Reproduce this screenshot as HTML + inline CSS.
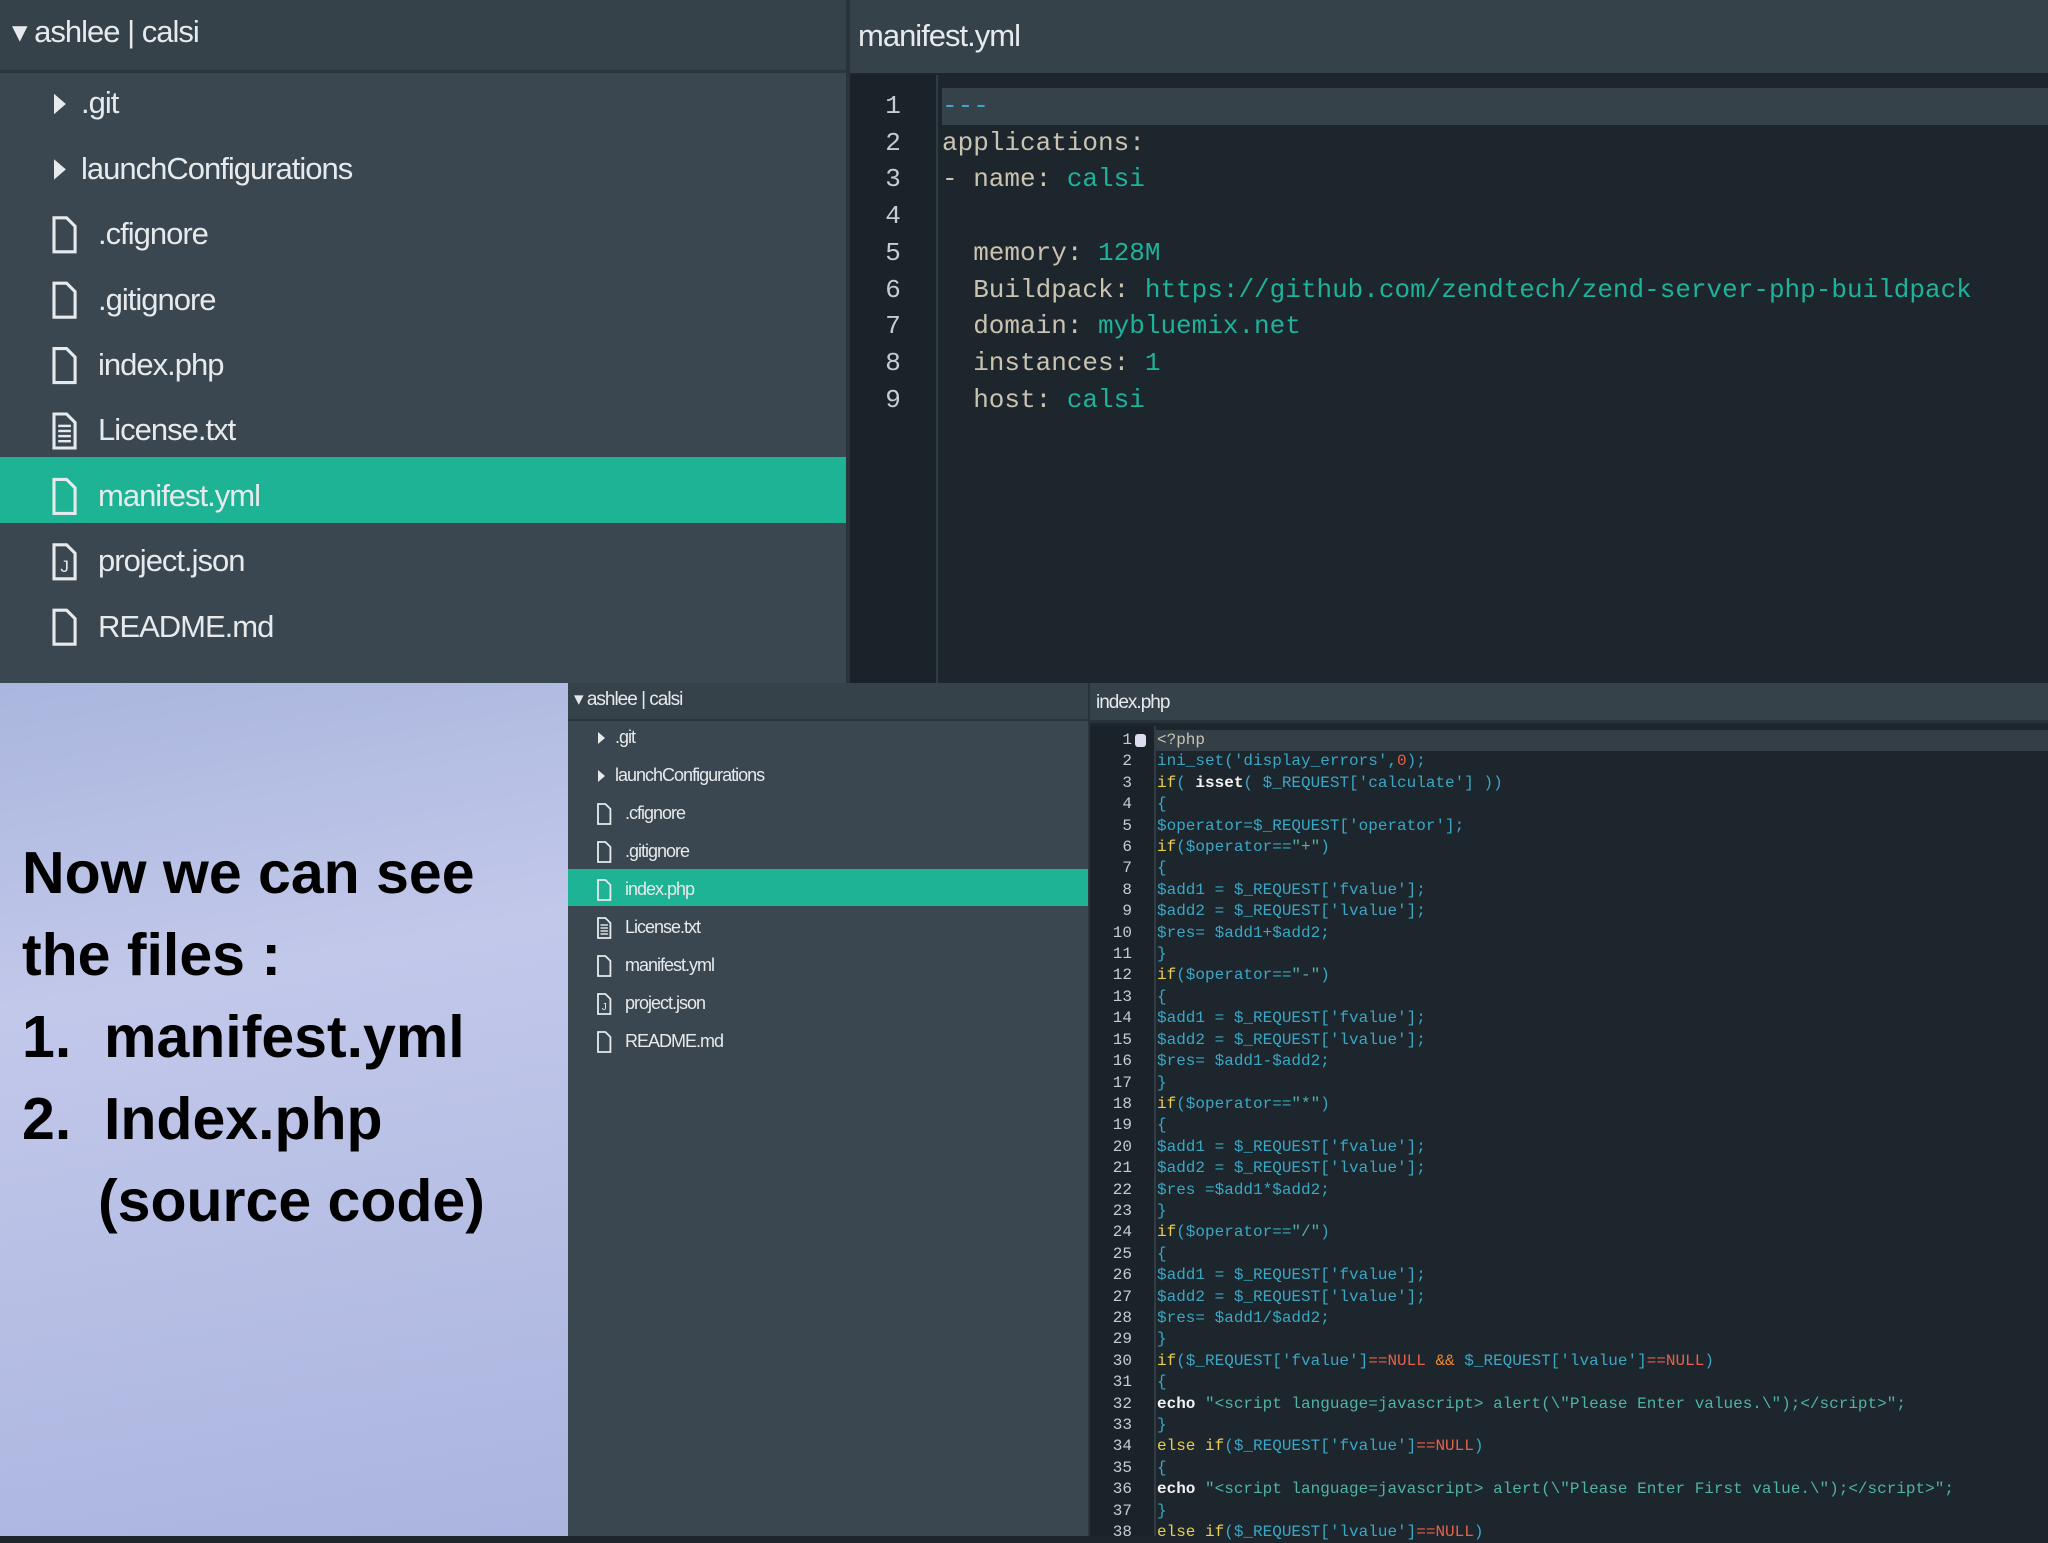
<!DOCTYPE html>
<html><head><meta charset="utf-8"><style>
*{margin:0;padding:0;box-sizing:border-box}
body{width:2048px;height:1536px;overflow:hidden;position:relative;background:#1d252d;font-family:"Liberation Sans",sans-serif}
.abs{position:absolute}
.side{background:#3b4750}
.hdr{background:#36424a;color:#e8ecee}
.row{position:absolute;left:0;right:0;color:#e6eaec;white-space:nowrap;letter-spacing:-1px}
.sel{background:#1db394}
.mono{font-family:"Liberation Mono",monospace;white-space:pre}
.c{color:#3aa7c4}.y{color:#e8cf4e}.w{color:#f2f2f2;font-weight:bold}.s{color:#4fb3a6}.r{color:#e8604a}.o{color:#f08a2c}.g{color:#c9c3b0}.t{color:#1fb29a}
svg{position:absolute}
</style></head><body>
<!-- TOP -->
<div class="abs side" style="left:0;top:0;width:846px;height:683px"></div>
<div class="abs hdr" style="left:0;top:0;width:846px;height:73px;border-bottom:3px solid #2c363d"></div>
<div class="row" style="top:14px;left:12px;font-size:31px">▾ ashlee | calsi</div>
<div class="abs" style="left:846px;top:0;width:4px;height:683px;background:#2a3339"></div>
<div class="abs hdr" style="left:850px;top:0;width:1198px;height:73px"></div>
<div class="row" style="top:18px;left:858px;font-size:31px">manifest.yml</div>
<div class="abs" style="left:850px;top:75px;width:86px;height:608px;background:#1b232a"></div>
<div class="abs" style="left:936px;top:75px;width:2px;height:608px;background:#313b42"></div>
<div class="abs" style="left:942px;top:88px;width:1106px;height:37px;background:#36424a"></div>

<div class="abs sel" style="left:0;top:457px;width:846px;height:66px"></div>
<div id="top-rows"></div>

<div class="abs mono" style="left:850px;top:88px;width:86px;text-align:center;font-size:26px;line-height:36.7px;color:#c7ccd0">1
2
3
4
5
6
7
8
9</div>
<div class="abs mono" style="left:942px;top:88px;font-size:26px;line-height:36.7px;color:#c9c3b0"><span class="c">---</span>
applications:
- name: <span class="t">calsi</span>

  memory: <span class="t">128M</span>
  Buildpack: <span class="t">https://github.com/zendtech/zend-server-php-buildpack</span>
  domain: <span class="t">mybluemix.net</span>
  instances: <span class="t">1</span>
  host: <span class="t">calsi</span></div>

<!-- BOTTOM LEFT slide -->
<div class="abs" style="left:0;top:683px;width:568px;height:853px;background:linear-gradient(170deg,#aab6de 0%,#c2c8ea 35%,#aab4df 100%)"></div>
<div class="abs" style="left:22px;top:832px;font-size:59px;font-weight:bold;line-height:82px;color:#000">Now we can see<br>the files :<br>1.&nbsp; manifest.yml<br>2.&nbsp; Index.php<br><span style="padding-left:76px">(source code)</span></div>

<!-- BOTTOM sidebar -->
<div class="abs side" style="left:568px;top:683px;width:520px;height:853px"></div>
<div class="abs hdr" style="left:568px;top:683px;width:520px;height:38px;border-bottom:2px solid #2c363d"></div>
<div class="row" style="top:686px;left:574px;font-size:19px;line-height:28px">▾ ashlee | calsi</div>
<div class="abs sel" style="left:568px;top:869px;width:520px;height:37px"></div>
<div id="bot-rows"></div>

<!-- BOTTOM editor -->
<div class="abs" style="left:1088px;top:683px;width:2px;height:853px;background:#2a3339"></div>
<div class="abs hdr" style="left:1090px;top:683px;width:958px;height:40px;border-bottom:3px solid #28323a"></div>
<div class="row" style="top:690px;left:1096px;font-size:19px;line-height:26px">index.php</div>
<div class="abs" style="left:1090px;top:726px;width:64px;height:810px;background:#1b232a"></div>
<div class="abs" style="left:1154px;top:726px;width:2px;height:810px;background:#323c44"></div>
<div class="abs" style="left:1156px;top:730px;width:892px;height:21px;background:#333e46"></div>
<div class="abs" style="left:1135px;top:734px;width:11px;height:13px;background:#dde;border-radius:3px"></div>
<div id="bcode"></div>

<script>
function fileIcon(x,y,s,kind,col){
 col=col||'#e6eaec';
 let w=s*0.62,h=s, f=s*0.25;
 let d=`M${x} ${y}h${w-f}l${f} ${f}v${h-f}h${-w}z`;
 let extra='';
 if(kind=='txt'){for(let i=0;i<4;i++)extra+=`<line x1="${x+w*0.2}" x2="${x+w*0.8}" y1="${y+h*(0.35+i*0.15)}" y2="${y+h*(0.35+i*0.15)}" stroke="${col}" stroke-width="${s/14}"/>`}
 if(kind=='json')extra=`<text x="${x+w*0.3}" y="${y+h*0.8}" font-size="${s*0.5}" fill="${col}" font-family="Liberation Sans">J</text>`;
 return `<path d="${d}" fill="none" stroke="${col}" stroke-width="${s/11}"/>`+extra;
}
function rows(cont,x0,top,pitch,fs,iconS,items,ox,fOff,dOff){
 let h='',svg='';
 items.forEach((it,i)=>{
  let y=top+i*pitch;
  if(it[1]=='dir'){
   svg+=`<path d="M${x0+ox} ${y-iconS*0.3}l${iconS*0.35} ${iconS*0.3}l${-iconS*0.35} ${iconS*0.3}z" fill="#e6eaec"/>`;
   h+=`<div class="row" style="left:${x0+ox+dOff}px;top:${y-fs*0.6}px;font-size:${fs}px">${it[0]}</div>`;
  } else {
   svg+=fileIcon(x0+ox,y-iconS/2,iconS,it[1]);
   h+=`<div class="row" style="left:${x0+ox+fOff}px;top:${y-fs*0.6}px;font-size:${fs}px">${it[0]}</div>`;
  }
 });
 document.getElementById(cont).innerHTML=h+`<svg style="left:0;top:0" width="2048" height="1536">${svg}</svg>`;
}
const items=[['.git','dir'],['launchConfigurations','dir'],['.cfignore','f'],['.gitignore','f'],['index.php','f'],['License.txt','txt'],['manifest.yml','f'],['project.json','json'],['README.md','f']];
rows('top-rows',0,104,65.4,31,34,items,54,44,27);
rows('bot-rows',568,738,38,18,20,items,30,27,17);

const L=[
'<span class="g">&lt;?php</span>',
'<span class="c">ini_set(\'display_errors\',</span><span class="r">0</span><span class="c">);</span>',
'<span class="y">if</span><span class="c">( </span><span class="w">isset</span><span class="c">( $_REQUEST[\'calculate\'] ))</span>',
'<span class="c">{</span>',
'<span class="c">$operator=$_REQUEST[\'operator\'];</span>',
'<span class="y">if</span><span class="c">($operator==</span><span class="s">"+"</span><span class="c">)</span>',
'<span class="c">{</span>',
'<span class="c">$add1 = $_REQUEST[\'fvalue\'];</span>',
'<span class="c">$add2 = $_REQUEST[\'lvalue\'];</span>',
'<span class="c">$res= $add1+$add2;</span>',
'<span class="c">}</span>',
'<span class="y">if</span><span class="c">($operator==</span><span class="s">"-"</span><span class="c">)</span>',
'<span class="c">{</span>',
'<span class="c">$add1 = $_REQUEST[\'fvalue\'];</span>',
'<span class="c">$add2 = $_REQUEST[\'lvalue\'];</span>',
'<span class="c">$res= $add1-$add2;</span>',
'<span class="c">}</span>',
'<span class="y">if</span><span class="c">($operator==</span><span class="s">"*"</span><span class="c">)</span>',
'<span class="c">{</span>',
'<span class="c">$add1 = $_REQUEST[\'fvalue\'];</span>',
'<span class="c">$add2 = $_REQUEST[\'lvalue\'];</span>',
'<span class="c">$res =$add1*$add2;</span>',
'<span class="c">}</span>',
'<span class="y">if</span><span class="c">($operator==</span><span class="s">"/"</span><span class="c">)</span>',
'<span class="c">{</span>',
'<span class="c">$add1 = $_REQUEST[\'fvalue\'];</span>',
'<span class="c">$add2 = $_REQUEST[\'lvalue\'];</span>',
'<span class="c">$res= $add1/$add2;</span>',
'<span class="c">}</span>',
'<span class="y">if</span><span class="c">($_REQUEST[\'fvalue\']</span><span class="r">==NULL</span> <span class="o">&amp;&amp;</span> <span class="c">$_REQUEST[\'lvalue\']</span><span class="r">==NULL</span><span class="c">)</span>',
'<span class="c">{</span>',
'<span class="w">echo</span> <span class="s">"&lt;script language=javascript&gt; alert(\\"Please Enter values.\\");&lt;/script&gt;";</span>',
'<span class="c">}</span>',
'<span class="y">else if</span><span class="c">($_REQUEST[\'fvalue\']</span><span class="r">==NULL</span><span class="c">)</span>',
'<span class="c">{</span>',
'<span class="w">echo</span> <span class="s">"&lt;script language=javascript&gt; alert(\\"Please Enter First value.\\");&lt;/script&gt;";</span>',
'<span class="c">}</span>',
'<span class="y">else if</span><span class="c">($_REQUEST[\'lvalue\']</span><span class="r">==NULL</span><span class="c">)</span>'];
let nums=L.map((_,i)=>i+1).join('\n');
document.getElementById('bcode').innerHTML=
 `<div class="abs mono" style="left:1090px;top:730px;width:42px;text-align:right;font-size:16px;line-height:21.4px;color:#c7ccd0">${nums}</div>`+
 `<div class="abs mono" style="left:1157px;top:730px;font-size:16px;line-height:21.4px">${L.join('\n')}</div>`;
</script>
</body></html>
